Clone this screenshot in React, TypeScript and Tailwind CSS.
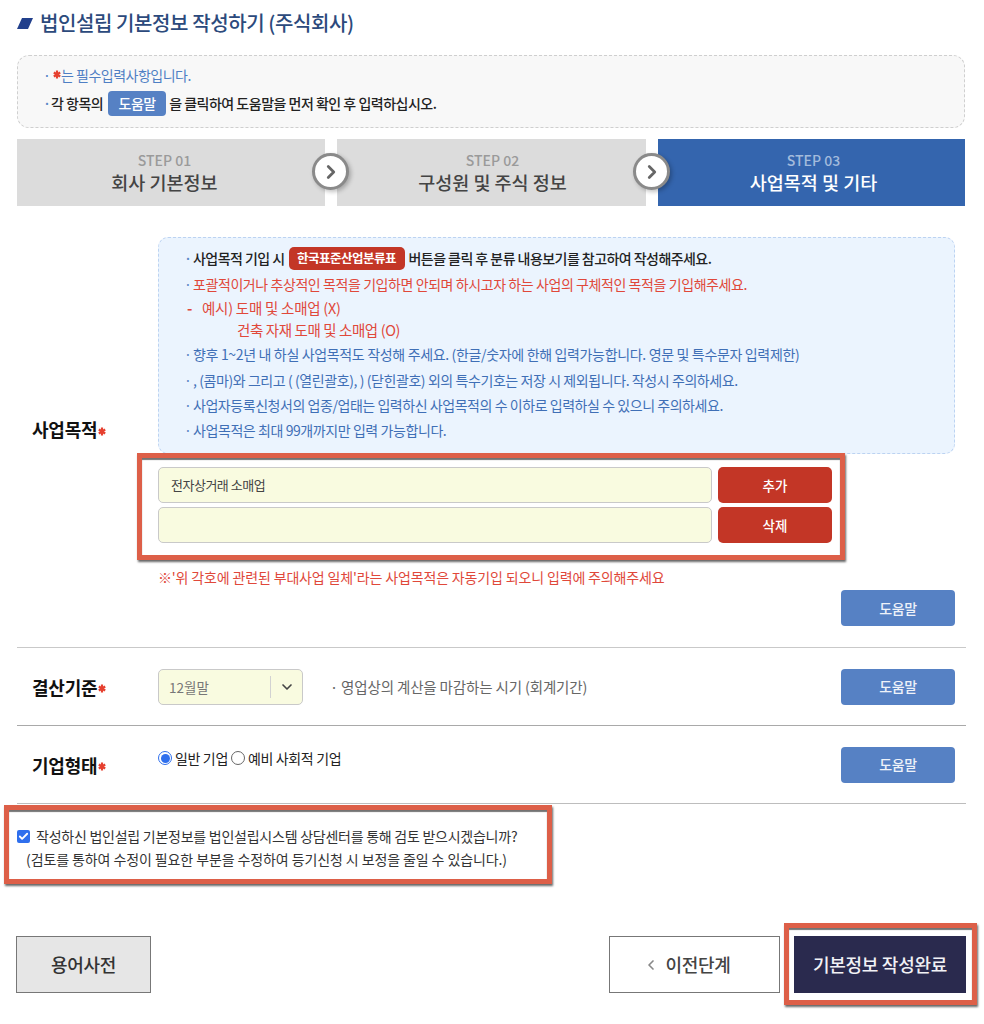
import { ChevronDown, ChevronLeft, ChevronRight, Check } from 'lucide-react'

const font = { fontFamily: '"Noto Sans CJK KR", "Noto Sans", sans-serif' }

function Star() {
  return (
    <svg width="8" height="9" viewBox="0 0 8 9" className="inline-block ml-[1px] align-middle mb-[2px] shrink-0">
      <path d="M4 0.5V8.5M0.8 2.5L7.2 6.5M7.2 2.5L0.8 6.5" stroke="#e6402f" strokeWidth="2.2" />
    </svg>
  )
}

function Help({ className = '' }: { className?: string }) {
  return (
    <button className={`w-[114px] h-[36px] shrink-0 rounded-[4px] bg-[#5681c4] text-[#eef2f9] text-[14px] font-medium tracking-[-0.3px] ${className}`}>
      도움말
    </button>
  )
}

function Annotation({ className }: { className: string }) {
  return <div className={`absolute border-[5px] border-[#dd5f48] shadow-[1px_2px_2px_rgba(0,0,0,0.6),inset_0_2px_1px_rgba(0,0,0,0.55)] pointer-events-none ${className}`} />
}

function Step({ no, title, active = false, className = '' }: { no: string; title: string; active?: boolean; className?: string }) {
  return (
    <div className={`h-[67px] pt-[1px] flex flex-col items-center justify-center ${active ? 'bg-[#3465ae]' : 'bg-[#dcdcdc]'} ${className}`}>
      <div className={`text-[14px] leading-[18px] font-medium ${active ? 'text-[#a3bbdc]' : 'text-[#9a9a9a]'}`}>{no}</div>
      <div className={`text-[18.5px] leading-[27px] font-medium ${active ? 'text-white' : 'text-[#444]'}`}>{title}</div>
    </div>
  )
}

function Arrow() {
  return (
    <div className="relative w-[12px] h-[67px] z-10 shrink-0">
      <div className="absolute left-[-13px] top-[14px] w-[37px] h-[37px] rounded-full bg-white border-[3px] border-[#8a8a8a] shadow-[2px_2px_4px_rgba(0,0,0,0.25)] flex items-center justify-center">
        <ChevronRight className="w-[22px] h-[22px] text-[#666]" strokeWidth={3} />
      </div>
    </div>
  )
}

function Bullet({ color, className = 'h-[26px] tracking-[-0.42px]', children }: { color: string; className?: string; children: React.ReactNode }) {
  return (
    <div className={`flex items-center text-[14px] whitespace-nowrap ${color} ${className}`}>
      <span className="w-[9px] text-[#5b86c6]">·</span>
      {children}
    </div>
  )
}

export default function App() {
  return (
    <div style={font} className="relative w-[984px] h-[1024px] bg-white overflow-hidden text-[#222]">
      <div className="ml-[17px] pt-[8px] w-[949px]">
        {/* title */}
        <div className="flex items-center h-[30px] gap-[7px]">
          <svg width="16" height="11" viewBox="0 0 16 11" className="shrink-0 mt-[1px]">
            <path d="M5 0H16L11 11H0Z" fill="#22408c" />
          </svg>
          <h1 className="text-[20px] font-medium tracking-[-0.4px] text-[#2c4a7c] whitespace-nowrap">법인설립 기본정보 작성하기 (주식회사)</h1>
        </div>

        {/* notice */}
        <div className="mt-[17px] w-[948px] h-[73px] rounded-[12px] border border-dashed border-[#cfcfcf] bg-[#f8f8f8] pl-[25px] pt-[6px]">
          <div className="flex items-center h-[26px] text-[14px] tracking-[-0.5px] text-[#4f7fc4]">
            <span className="w-[9px]">·</span><Star />는 필수입력사항입니다.
          </div>
          <div className="flex items-center h-[31px] text-[14px] tracking-[-0.5px] text-[#222] font-medium">
            <span className="w-[8px] text-[#5b86c6]">·</span>각 항목의
            <span className="ml-[5px] mr-[3px] w-[58px] h-[25px] rounded-[4px] bg-[#5681c4] text-white text-[14px] flex items-center justify-center">도움말</span>
            을 클릭하여 도움말을 먼저 확인 후 입력하십시오.
          </div>
        </div>

        {/* steps */}
        <div className="mt-[11px] flex w-[948px]">
          <Step no="STEP 01" title="회사 기본정보" className="w-[308px] pr-[13px]" />
          <Arrow />
          <Step no="STEP 02" title="구성원 및 주식 정보" className="w-[309px] pl-[2px]" />
          <Arrow />
          <Step no="STEP 03" title="사업목적 및 기타" active className="w-[307px] pl-[4px]" />
        </div>

        {/* 사업목적 */}
        <div className="flex h-[442px] border-b border-[#c9c9c9]">
          <div className="w-[141px] pl-[15px] pt-[210px] text-[18px] leading-[26px] font-bold tracking-[-0.2px] text-[#111] shrink-0 whitespace-nowrap">
            사업목적<Star />
          </div>
          <div className="w-[797px] pt-[31px]">
            <div className="h-[217px] rounded-[10px] border border-dashed border-[#bcd3f2] bg-[#ebf4fe] pl-[25px] pt-[7px]">
              <Bullet color="text-[#222] font-medium" className="h-[26px] tracking-[-0.55px]">
                사업목적 기입 시
                <span className="mx-[4px] w-[116px] h-[23px] rounded-[5px] bg-[#c33626] text-white text-[12.5px] font-bold flex items-center justify-center tracking-[-0.5px]">한국표준산업분류표</span>
                버튼을 클릭 후 분류 내용보기를 참고하여 작성해주세요.
              </Bullet>
              <Bullet color="text-[#e0483a]">포괄적이거나 추상적인 목적을 기입하면 안되며 하시고자 하는 사업의 구체적인 목적을 기입해주세요.</Bullet>
              <div className="flex h-[22px] items-center pl-[3px] text-[14.5px] tracking-[-0.25px] text-[#e0483a]">
                <span className="w-[15px] font-bold">-</span>예시) 도매 및 소매업 (X)
              </div>
              <div className="flex h-[22px] items-center pl-[53px] text-[14.5px] tracking-[-0.4px] text-[#e0483a]">건축 자재 도매 및 소매업 (O)</div>
              <Bullet color="text-[#3f6fb6]" className="h-[26px] tracking-[-0.34px]">향후 1~2년 내 하실 사업목적도 작성해 주세요. (한글/숫자에 한해 입력가능합니다. 영문 및 특수문자 입력제한)</Bullet>
              <Bullet color="text-[#3f6fb6]">, (콤마)와 그리고 ( (열린괄호), ) (닫힌괄호) 외의 특수기호는 저장 시 제외됩니다. 작성시 주의하세요.</Bullet>
              <Bullet color="text-[#3f6fb6]" className="h-[25px] tracking-[-0.45px]">사업자등록신청서의 업종/업태는 입력하신 사업목적의 수 이하로 입력하실 수 있으니 주의하세요.</Bullet>
              <Bullet color="text-[#3f6fb6]" className="h-[25px] tracking-[-0.42px]">사업목적은 최대 99개까지만 입력 가능합니다.</Bullet>
            </div>

            <div className="relative mt-[13px] w-[674px] flex flex-col gap-[4px]">
              <div className="flex gap-[6px]">
                <div className="w-[554px] h-[36px] rounded-[5px] border border-[#c9c9c9] bg-[#f9fbe0] pl-[12px] flex items-center text-[13px] tracking-[-0.5px] text-[#444]">전자상거래 소매업</div>
                <button className="w-[114px] h-[36px] rounded-[5px] bg-[#c33626] text-white text-[13.5px] font-medium">추가</button>
              </div>
              <div className="flex gap-[6px]">
                <div className="w-[554px] h-[36px] rounded-[5px] border border-[#c9c9c9] bg-[#f9fbe0]" />
                <button className="w-[114px] h-[36px] rounded-[5px] bg-[#c33626] text-white text-[13.5px] font-medium">삭제</button>
              </div>
              <Annotation className="left-[-21px] top-[-14px] w-[708px] h-[107px]" />
            </div>

            <div className="mt-[24px] text-[14px] leading-[20px] tracking-[-0.15px] text-[#e0483a] whitespace-nowrap">※'위 각호에 관련된 부대사업 일체'라는 사업목적은 자동기입 되오니 입력에 주의해주세요</div>
            <div className="flex justify-end mt-[3px] w-[797px]"><Help /></div>
          </div>
        </div>

        {/* 결산기준 */}
        <div className="flex items-center h-[78px] border-b border-[#a9a9a9]">
          <div className="w-[141px] pl-[15px] text-[18px] leading-[26px] font-bold tracking-[-0.2px] text-[#111] shrink-0 whitespace-nowrap">결산기준<Star /></div>
          <div className="w-[145px] h-[36px] rounded-[5px] border border-[#c9c9c9] bg-[#f9fbe0] flex items-center shrink-0">
            <span className="w-[112px] pl-[10px] text-[13.5px] text-[#777] border-r border-[#d2d2d2] leading-[22px]">12월말</span>
            <ChevronDown className="w-[16px] h-[16px] ml-[8px] text-[#444]" strokeWidth={2.5} />
          </div>
          <div className="ml-[27px] text-[14.5px] tracking-[-0.15px] text-[#666] flex-1 whitespace-nowrap">· 영업상의 계산을 마감하는 시기 (회계기간)</div>
          <Help className="mr-[11px]" />
        </div>

        {/* 기업형태 */}
        <div className="flex items-center h-[78px] border-b border-[#bdbdbd]">
          <div className="w-[141px] pl-[15px] text-[18px] leading-[26px] font-bold tracking-[-0.2px] text-[#111] shrink-0 whitespace-nowrap">기업형태<Star /></div>
          <div className="flex-1 flex items-center h-[20px] mb-[13px] text-[14px] tracking-[-0.35px] text-[#222]">
            <span className="w-[14px] h-[14px] rounded-full border border-[#2f6fed] flex items-center justify-center mr-[3px]">
              <span className="w-[9px] h-[9px] rounded-full bg-[#2f6fed]" />
            </span>
            일반 기업
            <span className="w-[14px] h-[14px] rounded-full border border-[#666] mx-[3px]" />
            예비 사회적 기업
          </div>
          <Help className="mr-[11px]" />
        </div>

        {/* 검토 */}
        <div className="relative pt-[21px] h-[132px] text-[14px] leading-[23px] text-[#333] whitespace-nowrap">
          <div className="flex items-center tracking-[-0.25px]">
            <span className="w-[13px] h-[13px] rounded-[2px] bg-[#2f6fed] flex items-center justify-center mr-[6px] shrink-0">
              <Check className="w-[11px] h-[11px] text-white" strokeWidth={4} />
            </span>
            작성하신 법인설립 기본정보를 법인설립시스템 상담센터를 통해 검토 받으시겠습니까?
          </div>
          <div className="pl-[9px] tracking-[-0.1px]">(검토를 통하여 수정이 필요한 부분을 수정하여 등기신청 시 보정을 줄일 수 있습니다.)</div>
          <Annotation className="left-[-13px] top-[1px] w-[548px] h-[79px]" />
        </div>

        {/* 하단 버튼 */}
        <div className="flex items-start -ml-[1px]">
          <button className="w-[135px] h-[57px] border border-[#777] bg-[#e6e6e6] text-[18px] font-medium tracking-[-0.3px] text-[#333]">용어사전</button>
          <button className="ml-[458px] w-[171px] h-[57px] pr-[15px] border border-[#777] bg-white text-[18px] font-medium tracking-[-0.3px] text-[#444] flex items-center justify-center gap-[6px]">
            <ChevronLeft className="w-[16px] h-[16px] text-[#888]" strokeWidth={2.5} />
            이전단계
          </button>
          <div className="relative ml-[14px]">
            <button className="w-[172px] h-[57px] bg-[#2a2a4e] text-[#f1f1f5] text-[18px] font-medium tracking-[-0.3px]">기본정보 작성완료</button>
            <Annotation className="left-[-10px] top-[-13px] w-[193px] h-[82px]" />
          </div>
        </div>
      </div>
    </div>
  )
}
